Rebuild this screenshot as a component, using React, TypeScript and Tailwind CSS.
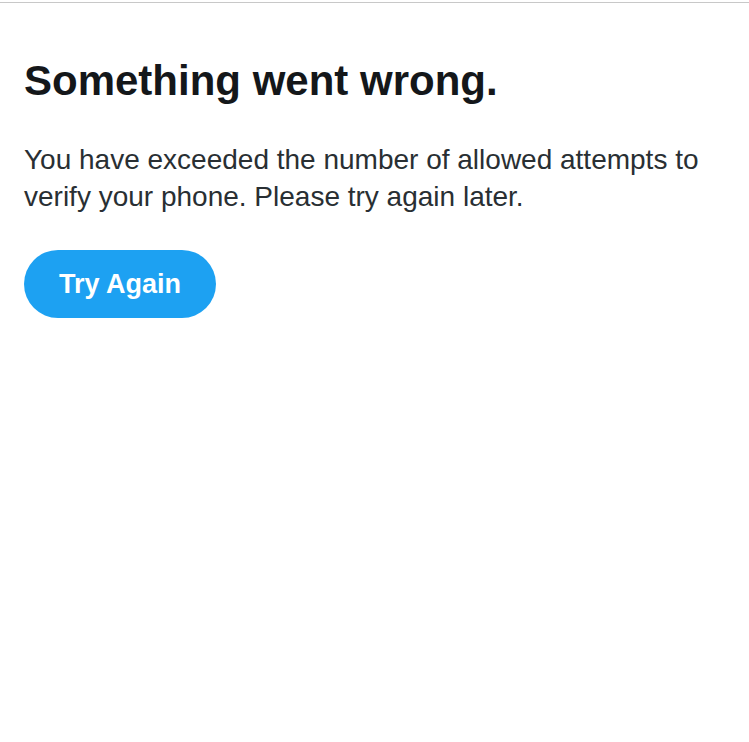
export default function App() {
  return (
    <div className="min-h-[742px] bg-white font-['Liberation_Sans',Arial,sans-serif]">
      <div className="h-[2px] bg-white" />
      <div className="h-[1px] bg-[#c8c8c8]" />
      <main className="px-6 pt-[52px]">
        <h1 className="text-[42px] font-bold leading-[52px] text-[#14171a]">Something went wrong.</h1>
        <p className="mt-[34px] text-[28px] leading-[37px] text-[#292f33]">
          You have exceeded the number of allowed attempts to verify your phone. Please try again later.
        </p>
        <button className="mt-[35px] h-[68px] w-[192px] rounded-full bg-[#1da1f2] text-[27px] font-bold text-white">
          Try Again
        </button>
      </main>
    </div>
  );
}
